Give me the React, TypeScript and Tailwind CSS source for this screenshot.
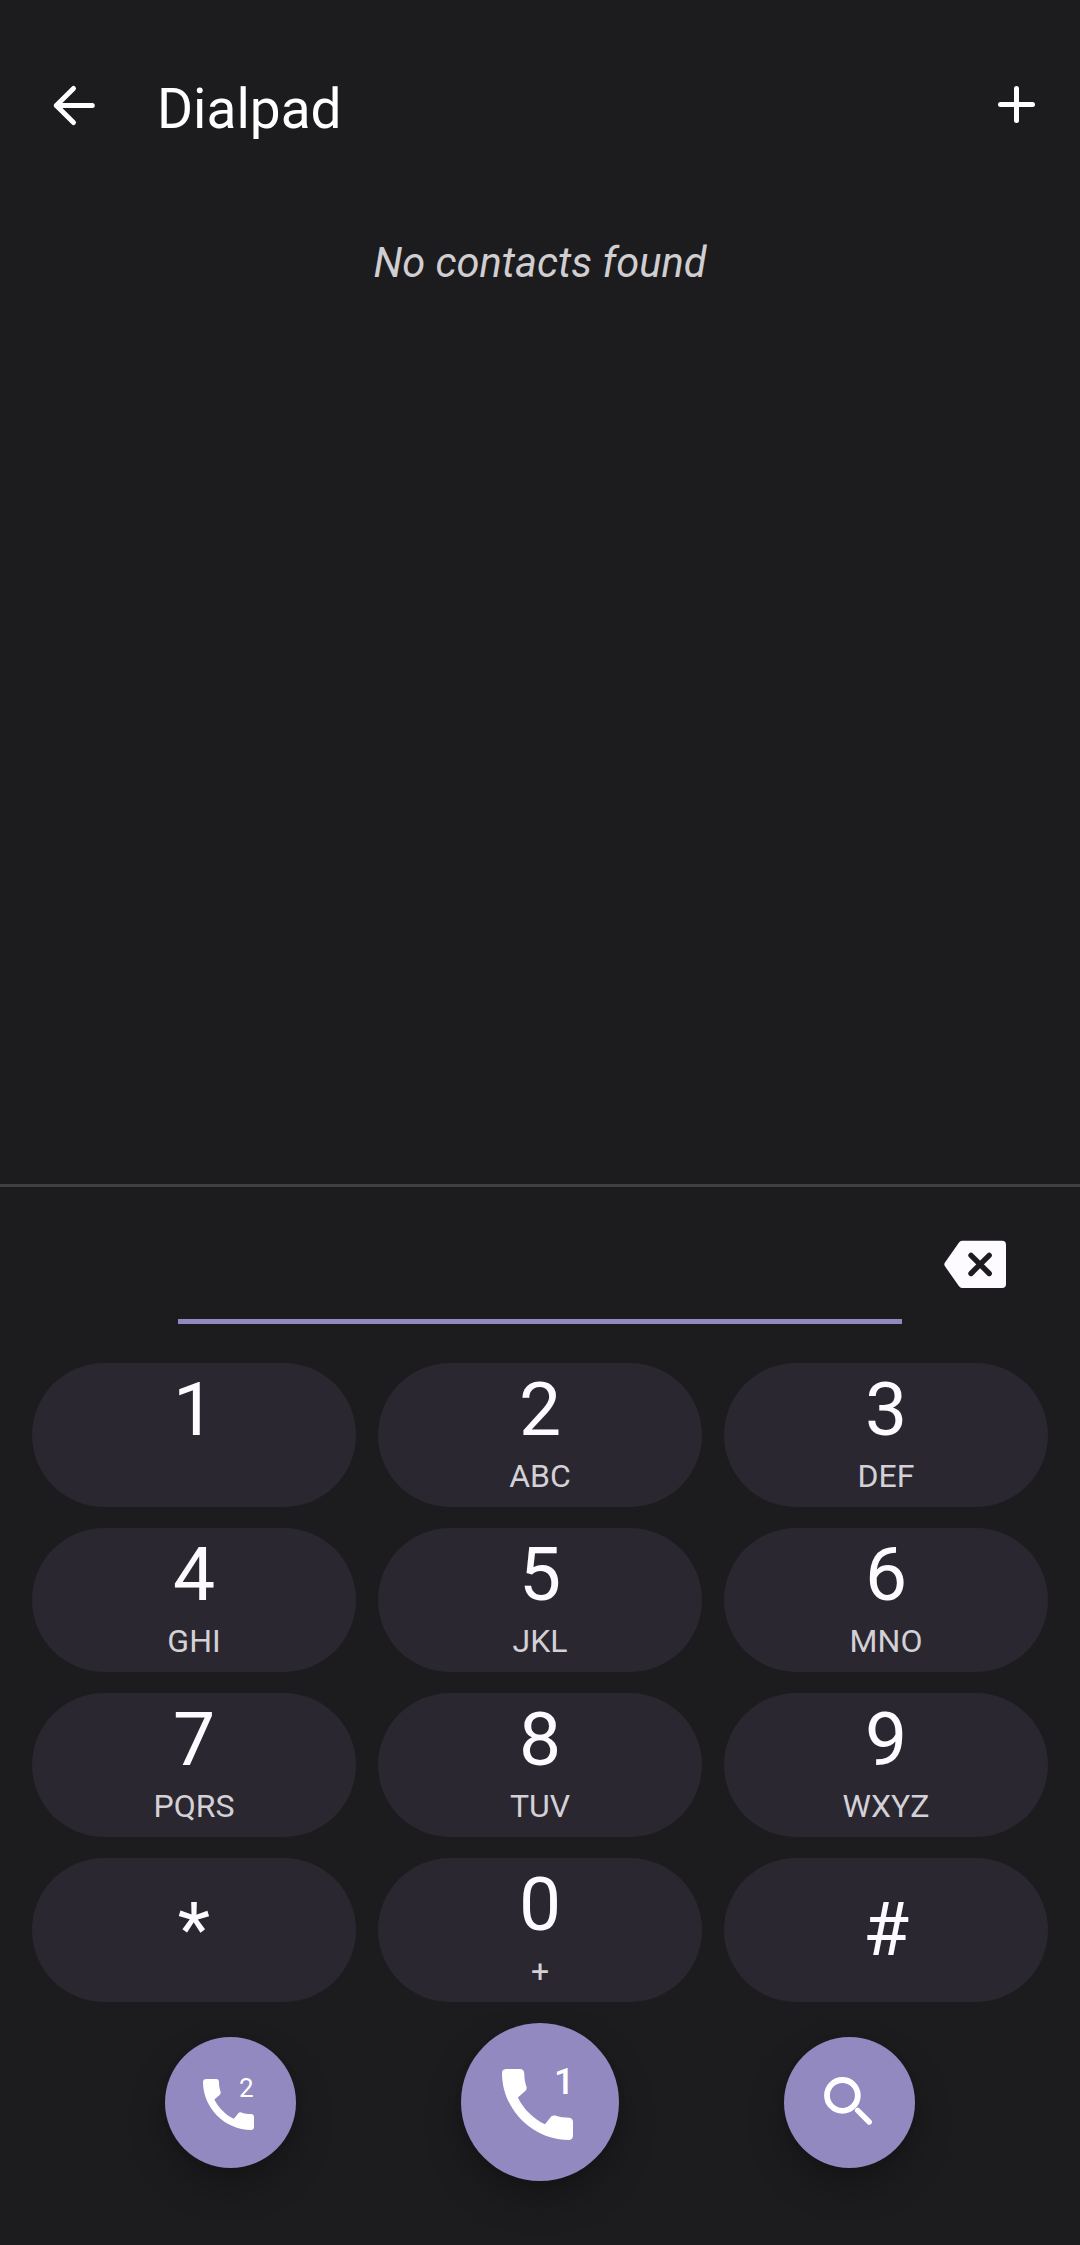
import type { ReactNode } from "react";

const KEYS = [
  { digit: "1", letters: "" },
  { digit: "2", letters: "ABC" },
  { digit: "3", letters: "DEF" },
  { digit: "4", letters: "GHI" },
  { digit: "5", letters: "JKL" },
  { digit: "6", letters: "MNO" },
  { digit: "7", letters: "PQRS" },
  { digit: "8", letters: "TUV" },
  { digit: "9", letters: "WXYZ" },
  { digit: "*", letters: null },
  { digit: "0", letters: "+" },
  { digit: "#", letters: null },
];

function BackIcon() {
  return (
    <svg className="h-12 w-12" viewBox="0 0 48 48" fill="none" stroke="currentColor" strokeWidth="5" strokeLinecap="round" strokeLinejoin="round">
      <path d="M42.3 24.5H6.3M23.5 7.5L6.3 24.5L23.5 41.5" />
    </svg>
  );
}

function PlusIcon() {
  return (
    <svg className="h-12 w-12" viewBox="0 0 48 48" fill="none" stroke="currentColor" strokeWidth="5" strokeLinecap="round">
      <path d="M24.5 8.5V40.5M8.5 24.5H40.5" />
    </svg>
  );
}

function BackspaceIcon() {
  return (
    <svg className="h-12 w-[62px]" viewBox="0 0 62 48">
      <path fill="currentColor" d="M18 0.7H58Q62 0.7 62 4.7V44Q62 48 58 48H18Q16.2 48 15 46.3L0.8 26Q-0.2 24.4 0.8 22.8L15 2.4Q16.2 0.7 18 0.7Z" />
      <path stroke="#1c1c1e" strokeWidth="5.4" strokeLinecap="round" d="M27 15.3L45.2 33.5M45.2 15.3L27 33.5" />
    </svg>
  );
}

function PhoneIcon({ className }: { className: string }) {
  return (
    <svg className={className} viewBox="3 3 18 18" fill="currentColor">
      <path d="M20.01 15.38c-1.23 0-2.42-.2-3.53-.56-.35-.12-.74-.03-1.01.24l-1.57 1.97c-2.83-1.35-5.48-3.9-6.89-6.83l1.95-1.66c.27-.28.35-.67.24-1.02-.37-1.11-.56-2.3-.56-3.53 0-.54-.45-.99-.99-.99H4.19C3.65 3 3 3.24 3 3.99 3 13.28 10.73 21 20.01 21c.71 0 .99-.63.99-1.18v-3.45c0-.54-.45-.99-.99-.99z" />
    </svg>
  );
}

function SearchIcon() {
  return (
    <svg className="h-12 w-12" viewBox="0 0 48 48" fill="none" stroke="currentColor" strokeLinecap="round">
      <circle cx="18.4" cy="18.4" r="15.4" strokeWidth="5.8" />
      <path d="M33.6 33.4L45.2 45" strokeWidth="5.4" />
    </svg>
  );
}

function RoundButton({ label, className, children }: { label: string; className: string; children: ReactNode }) {
  return (
    <button
      aria-label={label}
      className={`flex shrink-0 rounded-full bg-[#9289c1] text-white shadow-[0_18px_36px_rgba(0,0,0,0.26),0_0_6px_rgba(0,0,0,0.1)] ${className}`}
    >
      {children}
    </button>
  );
}

export default function App() {
  return (
    <div className="flex h-[2245px] w-[1080px] flex-col overflow-hidden bg-[#1c1c1e] font-['Roboto',sans-serif] text-white">
      <header className="flex h-[162px] items-start pt-[81px] pr-10 pl-[50px]">
        <button aria-label="Back"><BackIcon /></button>
        <h1 className="-mt-1 ml-[59px] text-[55px] leading-[64px]">Dialpad</h1>
        <button aria-label="Add contact" className="-mt-px mr-0 ml-auto"><PlusIcon /></button>
      </header>

      <main className="h-[1022px] pt-[76px] text-center text-[41.6px] leading-[50px] text-[#d0ced1] italic">
        No contacts found
      </main>

      <section className="flex flex-col border-t-[3px] border-[#404042] text-[#fdfbff]">
        <div className="flex h-[137px] pr-[74px] pl-[178px]">
          <div className="w-[724px] border-b-[5px] border-[#9289c1]" />
          <button aria-label="Delete" className="mt-[53px] ml-auto h-12"><BackspaceIcon /></button>
        </div>

        <div className="mt-[39px] grid grid-cols-3 gap-x-[22px] gap-y-[21px] px-8">
          {KEYS.map(({ digit, letters }) => (
            <button
              key={digit}
              className={`flex h-36 flex-col items-center rounded-[72px] bg-[#2a2731] ${letters === null ? "pt-[27px]" : "pt-0.5"}`}
            >
              <span className="text-[75px] leading-[88px]">{digit}</span>
              {letters && <span className="mt-1 text-[32px] leading-[38px] text-[#d3d1d6]">{letters}</span>}
            </button>
          ))}
        </div>

        <div className="mt-[21px] flex items-center justify-between pr-[165px] pl-[165px]">
          <RoundButton label="Call with SIM 2" className="h-[131px] w-[131px] pt-[42px] pl-[38px]">
            <PhoneIcon className="h-[51px] w-[51px] shrink-0" />
            <span className="-mt-1.5 -ml-[15px] text-[26px] leading-[31px]">2</span>
          </RoundButton>
          <RoundButton label="Call with SIM 1" className="h-[158px] w-[158px] pt-[46px] pl-[41px]">
            <PhoneIcon className="h-[71px] w-[71px] shrink-0" />
            <span className="-mt-2 -ml-[19px] text-[36px] leading-[42px] font-medium">1</span>
          </RoundButton>
          <RoundButton label="Search" className="h-[131px] w-[131px] pt-10 pl-10">
            <SearchIcon />
          </RoundButton>
        </div>
      </section>
    </div>
  );
}
